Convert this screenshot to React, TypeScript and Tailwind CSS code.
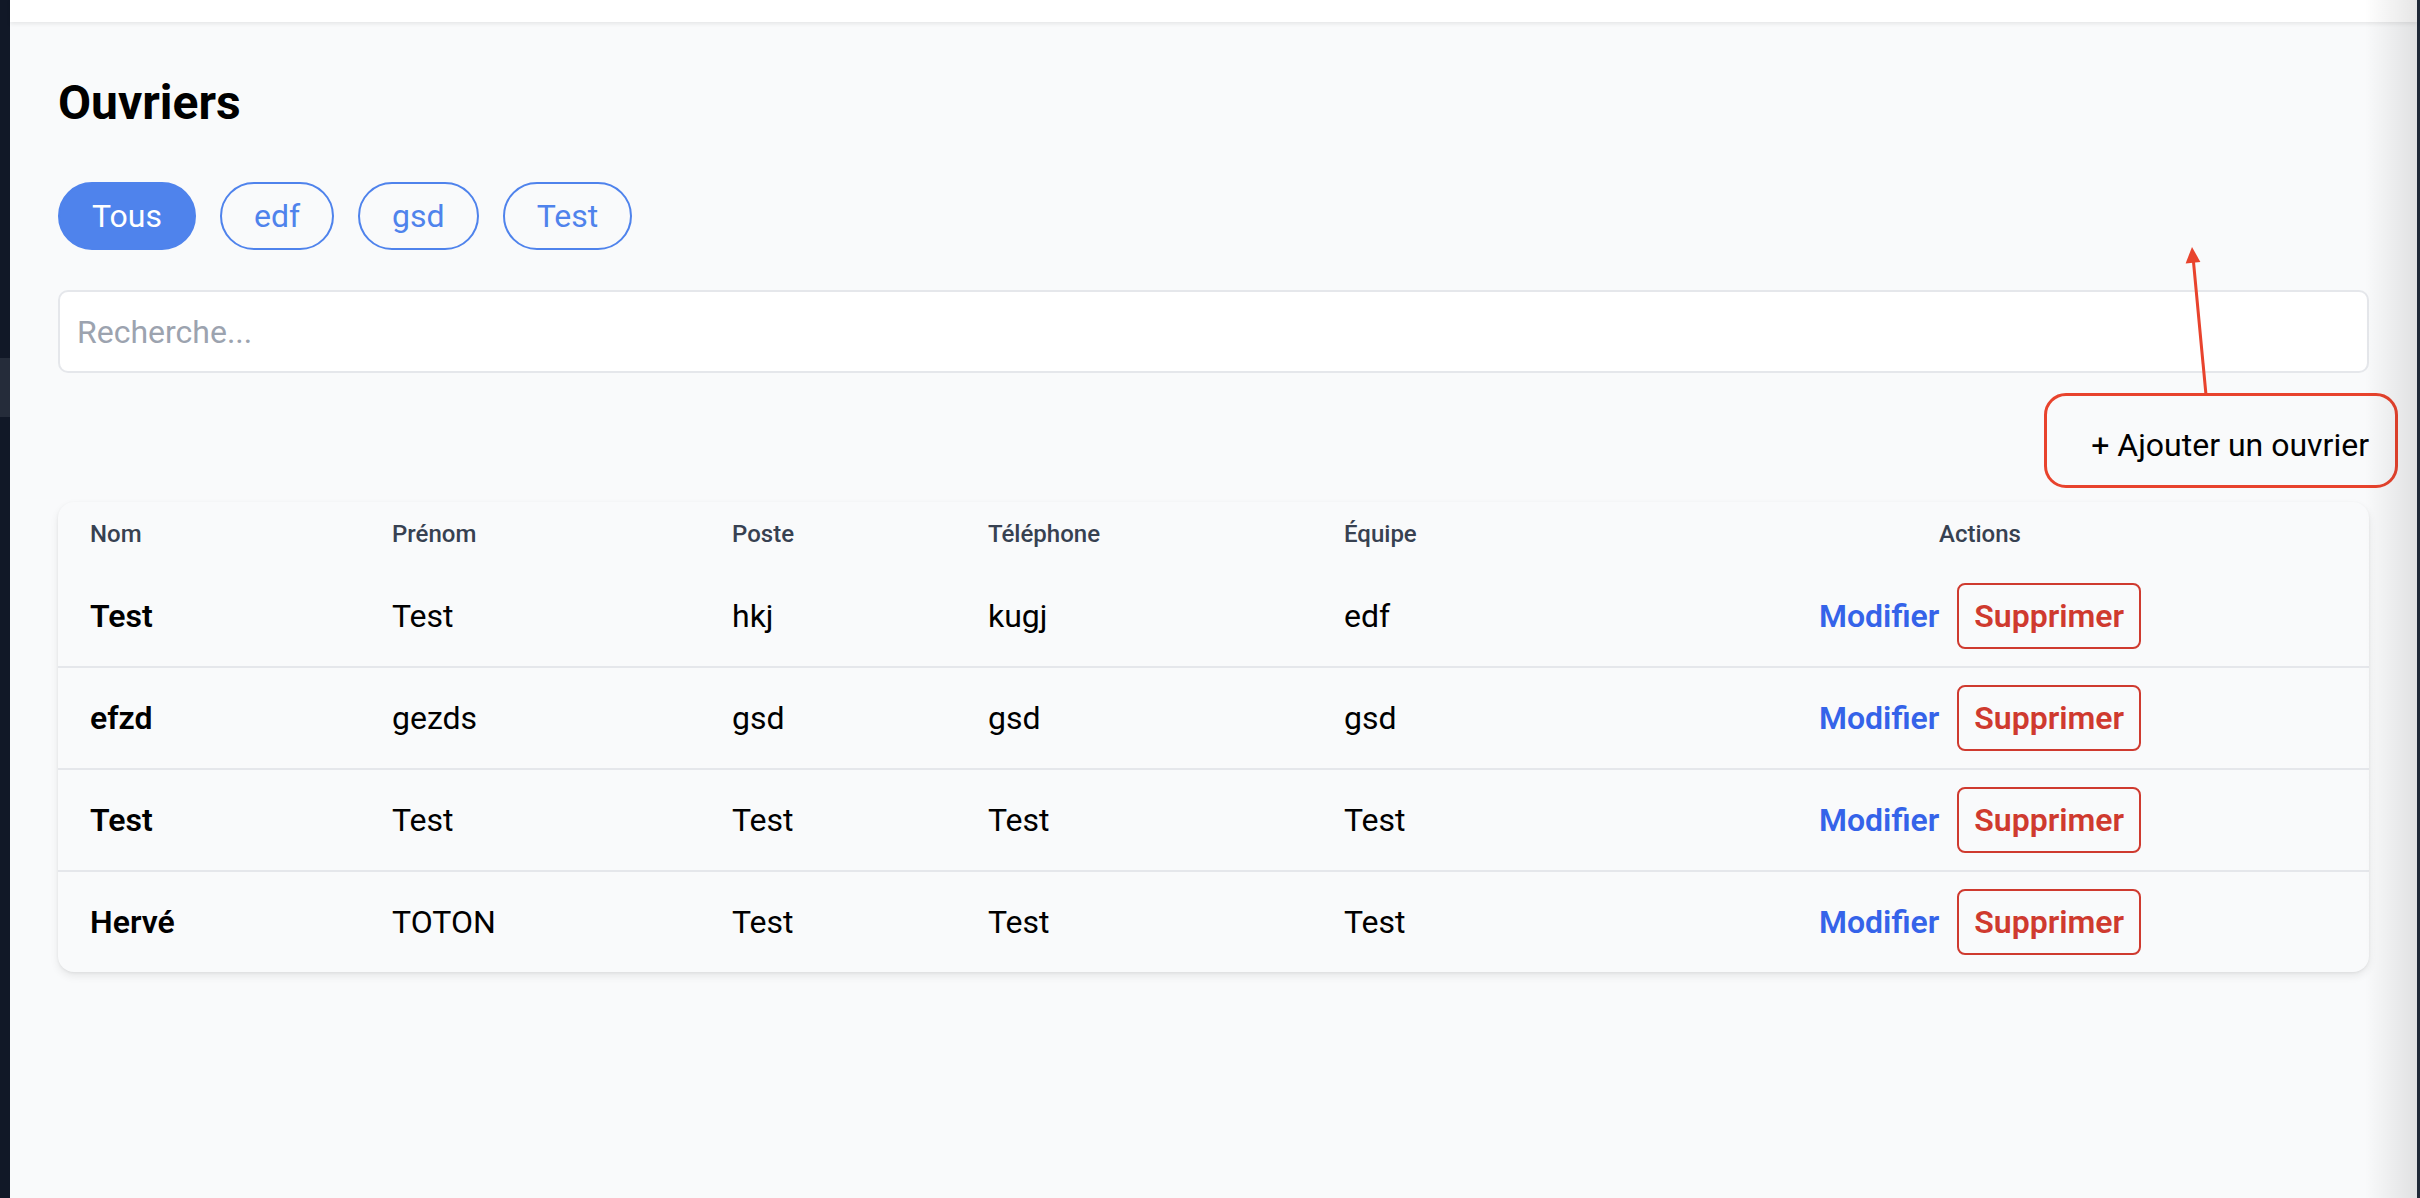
import { useState } from 'react';

type Worker = {
  nom: string;
  prenom: string;
  poste: string;
  telephone: string;
  equipe: string;
};

const workers: Worker[] = [
  { nom: 'Test', prenom: 'Test', poste: 'hkj', telephone: 'kugj', equipe: 'edf' },
  { nom: 'efzd', prenom: 'gezds', poste: 'gsd', telephone: 'gsd', equipe: 'gsd' },
  { nom: 'Test', prenom: 'Test', poste: 'Test', telephone: 'Test', equipe: 'Test' },
  { nom: 'Hervé', prenom: 'TOTON', poste: 'Test', telephone: 'Test', equipe: 'Test' },
];

const teams = ['Tous', 'edf', 'gsd', 'Test'];

export default function App() {
  const [activeTeam, setActiveTeam] = useState('Tous');
  const [search, setSearch] = useState('');

  return (
    <div className="flex min-h-screen font-['Roboto',sans-serif] text-black">
      {/* window behind, left edge */}
      <div className="flex w-[10px] flex-col bg-[#111827]">
        <div className="h-[358px]" />
        <div className="h-[59px] bg-[#252c3a]" />
      </div>

      <main className="relative flex-1 bg-[#f9fafb]">
        <div className="h-[22px] bg-white shadow-[0_2px_4px_rgba(0,0,0,0.08)]" />

        <div className="px-[48px] pt-[49px]">
          <h1 className="text-[48px] font-bold leading-[64px]">Ouvriers</h1>

          <div className="mt-[47px] flex gap-6">
            {teams.map((team) => (
              <button
                key={team}
                onClick={() => setActiveTeam(team)}
                className={`h-[68px] rounded-full border-2 border-[#4f83ec] px-8 text-[32px] leading-[48px] ${
                  activeTeam === team
                    ? 'bg-[#4f83ec] text-white'
                    : 'bg-transparent text-[#4f83ec]'
                }`}
              >
                {team}
              </button>
            ))}
          </div>

          <input
            value={search}
            onChange={(e) => setSearch(e.target.value)}
            placeholder="Recherche..."
            className="mt-[40px] block h-[83px] w-full rounded-[10px] border-2 border-[#e5e7eb] bg-white px-[17px] text-[32px] outline-none placeholder:text-[#9ca3af]"
          />

          <div className="mt-[32px] flex justify-end">
            <button className="py-[16px] text-[32px] leading-[48px] text-black">
              + Ajouter un ouvrier
            </button>
          </div>

          <div className="mt-[17px] overflow-hidden rounded-[16px] bg-[#f9fafb] shadow-[0_4px_8px_rgba(0,0,0,0.08),0_1px_3px_rgba(0,0,0,0.06)]">
            <table className="w-full table-fixed">
              <colgroup>
                <col className="w-[302px]" />
                <col className="w-[340px]" />
                <col className="w-[256px]" />
                <col className="w-[356px]" />
                <col className="w-[279px]" />
                <col />
              </colgroup>
              <thead>
                <tr className="text-left text-[24px] font-medium leading-[32px] text-[#374151]">
                  <th className="px-[32px] py-[16px] font-medium">Nom</th>
                  <th className="px-[32px] py-[16px] font-medium">Prénom</th>
                  <th className="px-[32px] py-[16px] font-medium">Poste</th>
                  <th className="px-[32px] py-[16px] font-medium">Téléphone</th>
                  <th className="px-[32px] py-[16px] font-medium">Équipe</th>
                  <th className="px-[32px] py-[16px] text-center font-medium">Actions</th>
                </tr>
              </thead>
              <tbody className="divide-y-2 divide-[#e5e7eb] text-[32px] leading-[48px]">
                {workers.map((w, i) => (
                  <tr key={i}>
                    <td className="px-[32px] py-[17px] font-semibold">{w.nom}</td>
                    <td className="px-[32px] py-[17px]">{w.prenom}</td>
                    <td className="px-[32px] py-[17px]">{w.poste}</td>
                    <td className="px-[32px] py-[17px]">{w.telephone}</td>
                    <td className="px-[32px] py-[17px]">{w.equipe}</td>
                    <td className="px-[32px] py-[17px]">
                      <div className="flex items-center justify-center gap-[18px]">
                        <button className="font-semibold text-[#3563e9]">Modifier</button>
                        <button className="h-[66px] rounded-[8px] border-2 border-[#cf3a2f] px-[15px] font-semibold text-[#cf3a2f]">
                          Supprimer
                        </button>
                      </div>
                    </td>
                  </tr>
                ))}
              </tbody>
            </table>
          </div>
        </div>

        {/* annotation over the screenshot */}
        <div className="pointer-events-none absolute left-[2034px] top-[393px] h-[95px] w-[354px] rounded-[22px] border-[3px] border-[#e8432d]" />
        <svg
          className="pointer-events-none absolute left-[2170px] top-[240px]"
          width="40"
          height="156"
          viewBox="0 0 40 156"
        >
          <line x1="26" y1="155" x2="13.4" y2="21" stroke="#e8432d" strokeWidth="3" />
          <polygon points="12,7 20.4,22 5.6,23.4" fill="#e8432d" />
        </svg>

        {/* shade on the right edge */}
        <div className="pointer-events-none absolute right-0 top-0 h-full w-[52px] bg-gradient-to-r from-transparent to-black/10" />
      </main>

      <div className="w-[3px] bg-[#1f2937]" />
    </div>
  );
}
